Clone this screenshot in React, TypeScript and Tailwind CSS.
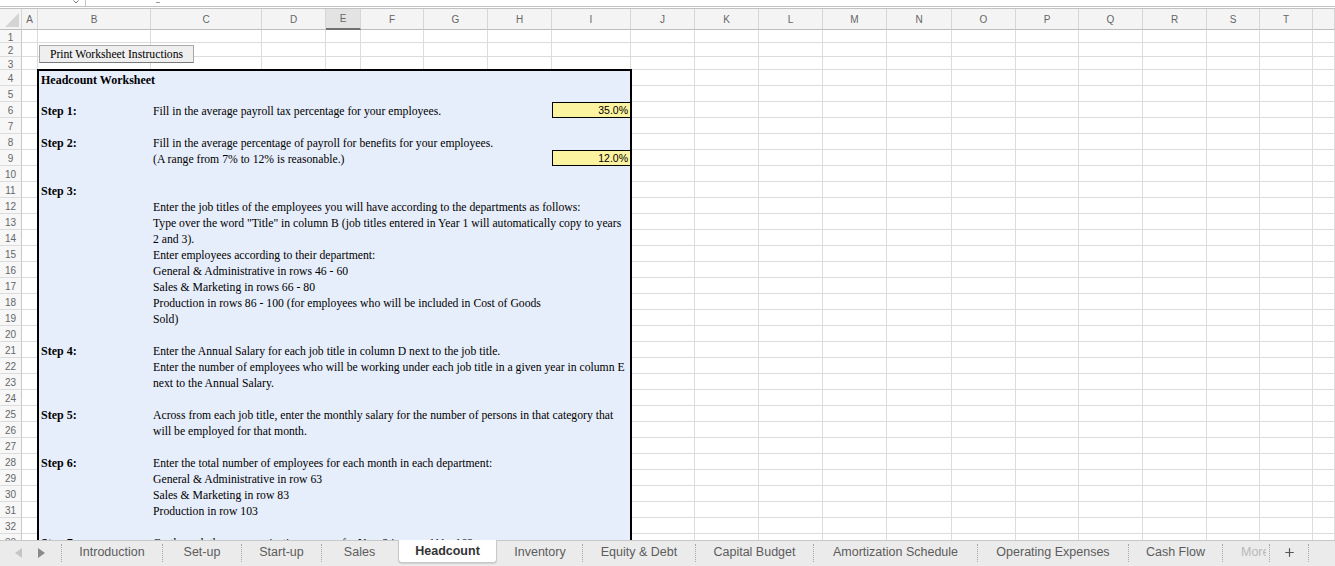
import { Plus } from 'lucide-react';

const COLS = ['A', 'B', 'C', 'D', 'E', 'F', 'G', 'H', 'I', 'J', 'K', 'L', 'M', 'N', 'O', 'P', 'Q', 'R', 'S', 'T', ''];

type Line = { heading?: string; label?: string; text?: string; value?: string };

// rows 4..33 of the worksheet box
const lines: Line[] = [
  { heading: 'Headcount Worksheet' },
  {},
  { label: 'Step 1:', text: 'Fill in the average payroll tax percentage for your employees.', value: '35.0%' },
  {},
  { label: 'Step 2:', text: 'Fill in the average percentage of payroll for benefits for your employees.' },
  { text: '(A range from 7% to 12% is reasonable.)', value: '12.0%' },
  {},
  { label: 'Step 3:' },
  { text: 'Enter the job titles of the employees you will have according to the departments as follows:' },
  { text: 'Type over the word "Title" in column B (job titles entered in Year 1 will automatically copy to years' },
  { text: '2 and 3).' },
  { text: 'Enter employees according to their department:' },
  { text: 'General & Administrative in rows 46 - 60' },
  { text: 'Sales & Marketing in rows 66 - 80' },
  { text: 'Production in rows 86 - 100 (for employees who will be included in Cost of Goods' },
  { text: 'Sold)' },
  {},
  { label: 'Step 4:', text: 'Enter the Annual Salary for each job title in column D next to the job title.' },
  { text: 'Enter the number of employees who will be working under each job title in a given year in column E' },
  { text: 'next to the Annual Salary.' },
  {},
  { label: 'Step 5:', text: 'Across from each job title, enter the monthly salary for the number of persons in that category that' },
  { text: 'will be employed for that month.' },
  {},
  { label: 'Step 6:', text: 'Enter the total number of employees for each month in each department:' },
  { text: 'General & Administrative in row 63' },
  { text: 'Sales & Marketing in row 83' },
  { text: 'Production in row 103' },
  {},
  { label: 'Step 7:', text: 'Go through the same projection process for Year 2 in rows 111 - 168' },
];

const tabs = [
  { label: 'Introduction', w: 'w-[100px]' },
  { label: 'Set-up', w: 'w-[78px]' },
  { label: 'Start-up', w: 'w-[79px]' },
  { label: 'Sales', w: 'w-[75px]' },
  { label: 'Headcount', w: 'w-[99px]', active: true },
  { label: 'Inventory', w: 'w-[84px]' },
  { label: 'Equity & Debt', w: 'w-[112px]' },
  { label: 'Capital Budget', w: 'w-[117px]' },
  { label: 'Amortization Schedule', w: 'w-[163px]' },
  { label: 'Operating Expenses', w: 'w-[150px]' },
  { label: 'Cash Flow', w: 'w-[93px]' },
];

const TopStrip = () => (
  <div className="h-[9px] shrink-0 flex border-b-[3px] border-double border-[#c2c2c2]">
    <div className="w-[86px] border-r border-[#c4c4c4] flex justify-end pr-[6px]">
      <svg width="6" height="4" viewBox="0 0 6 4">
        <polyline points="0.5,0.5 3,3 5.5,0.5" fill="none" stroke="#777" strokeWidth="1" />
      </svg>
    </div>
    <div className="w-[74px] flex justify-end">
      <div className="w-[4px] h-[3px] border-b border-[#999]" />
    </div>
  </div>
);

const WorksheetBox = () => (
  <div className="col-start-3 col-span-8 row-start-5 row-span-30 -m-px relative z-10 border-2 border-black bg-[#e7eefb] overflow-hidden font-['Liberation_Serif',serif] text-[11.7px] text-black">
    {lines.map((l, i) => (
      <div key={i} className={`flex ${i === 0 ? 'h-[15px]' : 'h-[16px]'}`}>
        <div className="w-[112px] shrink-0 pl-[2px] pt-[2px] flex items-center font-bold text-[12px] whitespace-nowrap">
          {l.heading ?? l.label}
        </div>
        <div className="flex-1 min-w-0 pl-[2px] pt-[3px] flex items-center whitespace-nowrap">{l.text}</div>
        {l.value && (
          <div className="w-[78px] shrink-0 bg-[#fcf3a0] border-y border-l border-black flex items-center justify-end pr-[2px] pt-[1px] font-['Liberation_Sans',Arial,sans-serif] text-[10.5px]">
            {l.value}
          </div>
        )}
      </div>
    ))}
  </div>
);

const Sheet = () => {
  const cells: React.ReactNode[] = [];

  cells.push(
    <div key="corner" className="bg-[#f4f4f4] border-r border-b border-r-[#d6d6d6] border-b-[#bdbdbd] flex items-end justify-end pr-[1px] pb-[1px]">
      <svg width="16" height="16" viewBox="0 0 16 16">
        <polygon points="15,1 15,15 1,15" fill="#d4d4d4" />
      </svg>
    </div>
  );

  COLS.forEach((c, i) =>
    cells.push(
      <div
        key={'h' + i}
        className={
          c === 'E'
            ? 'bg-[#e3e3e3] border-r border-r-[#d6d6d6] border-b-2 border-b-[#707070] flex items-center justify-center text-[10px] text-[#666]'
            : 'bg-[#f4f4f4] border-r border-r-[#d6d6d6] border-b border-b-[#bdbdbd] flex items-center justify-center text-[10px] text-[#666]'
        }
      >
        {c}
      </div>
    )
  );

  for (let r = 1; r <= 33; r++) {
    cells.push(
      <div key={'r' + r} className="bg-[#f7f7f7] border-r border-b border-r-[#c9c9c9] border-b-[#dcdcdc] flex items-center justify-center pt-[2px] text-[10px] text-[#666]">
        {r}
      </div>
    );
    COLS.forEach((_, i) => {
      if (r >= 4 && i >= 1 && i <= 8) return;
      if (r === 2 && i === 1) {
        cells.push(
          <div key={r + '-' + i} className="relative border-r border-b border-[#dcdcdc]">
            <button className="absolute left-[1px] top-[2px] z-20 w-[155px] h-[18px] bg-[#efefef] border border-[#a9a9a9] border-b-[#7a7a7a] border-b-dotted font-['Liberation_Serif',serif] text-[11.7px] text-black flex items-center justify-center pt-[1px]">
              Print Worksheet Instructions
            </button>
          </div>
        );
        return;
      }
      cells.push(<div key={r + '-' + i} className="border-r border-b border-[#dcdcdc]" />);
    });
  }

  return (
    <div className="grid grid-cols-[22px_16px_113px_111px_64px_35px_63px_64px_64px_79px_64px_64px_64px_64px_65px_64px_63px_64px_64px_53px_53px_1fr] grid-rows-[21px_13px_14px_13px_repeat(30,16px)]">
      {cells}
      <WorksheetBox />
    </div>
  );
};

const Sep = (props: { hidden?: boolean }) => (
  <div className={props.hidden ? 'w-px shrink-0' : 'w-px h-[18px] mt-[3px] shrink-0 border-l border-dotted border-[#a8a8a8]'} />
);

const TabBar = () => (
  <div className="h-[26px] shrink-0 bg-[#ebebeb] border-t border-[#c8c8c8] flex items-start text-[12.5px] text-[#5c5c5c]">
    <div className="w-[61px] h-[23px] shrink-0 flex items-center pl-[15px] gap-[16px]">
      <svg width="7" height="10" viewBox="0 0 7 10">
        <polygon points="7,0 7,10 0,5" fill="#c6c6c6" />
      </svg>
      <svg width="7" height="10" viewBox="0 0 7 10">
        <polygon points="0,0 0,10 7,5" fill="#8a8a8a" />
      </svg>
    </div>
    {tabs.map((t, i) => {
      const nextActive = tabs[i]?.active || tabs[i - 1]?.active;
      return (
        <div key={t.label} className="flex items-start">
          <Sep hidden={nextActive} />
          {t.active ? (
            <div className={`${t.w} h-[23px] -mt-px shrink-0 bg-white border-x border-b border-[#c9c9c9] rounded-b-[4px] shadow-[0_1px_1px_rgba(0,0,0,0.12)] flex items-center justify-center font-bold text-[#333] whitespace-nowrap`}>
              {t.label}
            </div>
          ) : (
            <div className={`${t.w} h-[23px] shrink-0 flex items-center justify-center whitespace-nowrap`}>{t.label}</div>
          )}
        </div>
      );
    })}
    <Sep />
    <div className="w-[46px] h-[23px] shrink-0 flex items-center pl-[18px]">
      <div className="w-[25px] overflow-hidden whitespace-nowrap text-[#b9b9b9]">More</div>
    </div>
    <Sep />
    <div className="w-[38px] h-[23px] shrink-0 flex items-center justify-center text-[#555]">
      <Plus size={13} strokeWidth={2.2} />
    </div>
    <Sep />
  </div>
);

export default function App() {
  return (
    <div className="w-[1335px] h-[566px] overflow-hidden bg-white flex flex-col font-['Liberation_Sans',Arial,sans-serif]">
      <TopStrip />
      <div className="flex-1 min-h-0 overflow-hidden">
        <Sheet />
      </div>
      <TabBar />
    </div>
  );
}
